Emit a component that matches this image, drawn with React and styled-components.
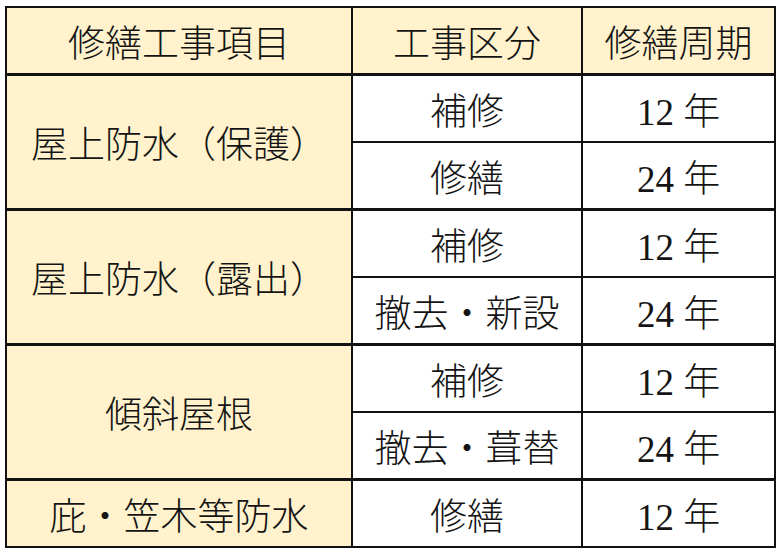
import styled, { createGlobalStyle } from "styled-components";

const GlobalStyle = createGlobalStyle`
  html, body {
    margin: 0;
    padding: 0;
    background: #ffffff;
  }
`;

const Page = styled.div`
  padding: 6px 0 0 5px;
  font-family: "Liberation Serif", "Noto Sans CJK JP", serif;
  font-weight: 300;
  color: #141414;
`;

const Table = styled.table`
  border-collapse: collapse;
  table-layout: fixed;
  width: 769px;
  border: 2px solid #111;
`;

const Row = styled.tr`
  height: 67.5px;
  border-top: ${(p) => (p.$group ? "3px" : "2px")} solid #111;
`;

const HeadCell = styled.th`
  background: #fff2cc;
  border: 2px solid #111;
  font-size: 37px;
  font-weight: 300;
  text-align: center;
  padding: 0;
  white-space: nowrap;
`;

const ItemCell = styled.td`
  background: #fff2cc;
  border-left: 2px solid #111;
  border-right: 2px solid #111;
  font-size: 37px;
  text-align: center;
  padding: 0;
  white-space: nowrap;
`;

const Cell = styled.td`
  background: #ffffff;
  border-left: 2px solid #111;
  border-right: 2px solid #111;
  font-size: 37px;
  text-align: center;
  padding: 0;
  white-space: nowrap;
`;

const groups = [
  { item: "屋上防水（保護）", rows: [["補修", "12"], ["修繕", "24"]] },
  { item: "屋上防水（露出）", rows: [["補修", "12"], ["撤去・新設", "24"]] },
  { item: "傾斜屋根", rows: [["補修", "12"], ["撤去・葺替", "24"]] },
  { item: "庇・笠木等防水", rows: [["修繕", "12"]] },
];

const App = () => {
  return (
    <Page>
      <GlobalStyle />
      <Table>
        <colgroup>
          <col style={{ width: "346px" }} />
          <col style={{ width: "230px" }} />
          <col style={{ width: "193px" }} />
        </colgroup>
        <thead>
          <Row>
            <HeadCell>修繕工事項目</HeadCell>
            <HeadCell>工事区分</HeadCell>
            <HeadCell>修繕周期</HeadCell>
          </Row>
        </thead>
        <tbody>
          {groups.map((g) =>
            g.rows.map((r, i) => (
              <Row key={g.item + i} $group={i === 0}>
                {i === 0 && (
                  <ItemCell rowSpan={g.rows.length}>{g.item}</ItemCell>
                )}
                <Cell>{r[0]}</Cell>
                <Cell>{r[1]} 年</Cell>
              </Row>
            ))
          )}
        </tbody>
      </Table>
    </Page>
  );
};

export default App;
